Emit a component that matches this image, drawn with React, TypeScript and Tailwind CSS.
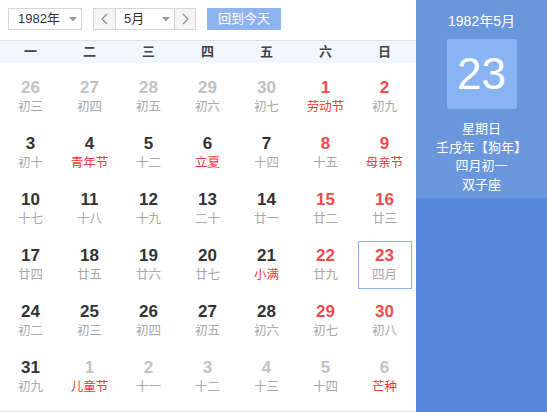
import React from "react";

type Day = {
  n: number;
  l: string;
  other?: boolean;
  red?: boolean;
  fest?: boolean;
  today?: boolean;
};

const weeks: Day[][] = [
  [
    { n: 26, l: "初三", other: true },
    { n: 27, l: "初四", other: true },
    { n: 28, l: "初五", other: true },
    { n: 29, l: "初六", other: true },
    { n: 30, l: "初七", other: true },
    { n: 1, l: "劳动节", red: true, fest: true },
    { n: 2, l: "初九", red: true },
  ],
  [
    { n: 3, l: "初十" },
    { n: 4, l: "青年节", fest: true },
    { n: 5, l: "十二" },
    { n: 6, l: "立夏", fest: true },
    { n: 7, l: "十四" },
    { n: 8, l: "十五", red: true },
    { n: 9, l: "母亲节", red: true, fest: true },
  ],
  [
    { n: 10, l: "十七" },
    { n: 11, l: "十八" },
    { n: 12, l: "十九" },
    { n: 13, l: "二十" },
    { n: 14, l: "廿一" },
    { n: 15, l: "廿二", red: true },
    { n: 16, l: "廿三", red: true },
  ],
  [
    { n: 17, l: "廿四" },
    { n: 18, l: "廿五" },
    { n: 19, l: "廿六" },
    { n: 20, l: "廿七" },
    { n: 21, l: "小满", fest: true },
    { n: 22, l: "廿九", red: true },
    { n: 23, l: "四月", red: true, today: true },
  ],
  [
    { n: 24, l: "初二" },
    { n: 25, l: "初三" },
    { n: 26, l: "初四" },
    { n: 27, l: "初五" },
    { n: 28, l: "初六" },
    { n: 29, l: "初七", red: true },
    { n: 30, l: "初八", red: true },
  ],
  [
    { n: 31, l: "初九" },
    { n: 1, l: "儿童节", other: true, fest: true },
    { n: 2, l: "十一", other: true },
    { n: 3, l: "十二", other: true },
    { n: 4, l: "十三", other: true },
    { n: 5, l: "十四", other: true },
    { n: 6, l: "芒种", other: true, fest: true },
  ],
];

const weekdays = ["一", "二", "三", "四", "五", "六", "日"];

function Caret() {
  return (
    <svg width="8" height="5" viewBox="0 0 8 5" className="shrink-0">
      <path d="M0 0 L8 0 L4 4.5 Z" fill="#9a9a9a" />
    </svg>
  );
}

function Chevron({ dir }: { dir: "l" | "r" }) {
  return (
    <svg width="7" height="12" viewBox="0 0 7 12">
      <path
        d={dir === "l" ? "M6 1 L1 6 L6 11" : "M1 1 L6 6 L1 11"}
        fill="none"
        stroke="#8a8a8a"
        strokeWidth="1.1"
      />
    </svg>
  );
}

function DayCell({ d }: { d: Day }) {
  const numColor = d.other
    ? "text-[#c2c2c2]"
    : d.red
    ? "text-[#f24a4a]"
    : "text-[#333333]";
  const lunarColor = d.fest ? "text-[#f23a3a]" : "text-[#a8a8a8]";
  return (
    <div className="flex h-[56px] items-center justify-center">
      <div
        className={
          "flex h-[48px] w-[54px] flex-col items-center justify-center " +
          (d.today ? "border border-[#8cb4f0]" : "border border-transparent")
        }
      >
        <div className={"text-[17px] font-bold leading-[19px] " + numColor}>
          {d.n}
        </div>
        <div className={"mt-[2px] text-[12.5px] leading-[17px] " + lunarColor}>
          {d.l}
        </div>
      </div>
    </div>
  );
}

export default function App() {
  return (
    <div
      className="flex h-[412px] w-[547px] overflow-hidden bg-white"
      style={{ fontFamily: '"Liberation Sans", Arial, "Noto Sans CJK SC", sans-serif' }}
    >
      <div className="flex w-[416px] flex-col border-b border-[#dcdcdc]">
        <div className="flex h-[40px] items-start gap-[11px] pl-[8px] pt-[8px]">
          <div className="flex h-[22px] w-[74px] items-center justify-between border border-[#d6d6d6] pl-[9px] pr-[4px] text-[13px] text-[#333]">
            <span>1982年</span>
            <Caret />
          </div>
          <div className="flex h-[22px] border border-[#d6d6d6] text-[13px] text-[#333]">
            <div className="flex w-[22px] items-center justify-center border-r border-[#d6d6d6] bg-[#f4f4f4]">
              <Chevron dir="l" />
            </div>
            <div className="flex w-[58px] items-center justify-between pl-[8px] pr-[4px]">
              <span>5月</span>
              <Caret />
            </div>
            <div className="flex w-[21px] items-center justify-center border-l border-[#d6d6d6] bg-[#f4f4f4]">
              <Chevron dir="r" />
            </div>
          </div>
          <div className="flex h-[22px] w-[74px] items-center justify-center bg-[#8db4ee] text-[13px] text-white">
            回到今天
          </div>
        </div>
        <div className="grid h-[23px] grid-cols-7 border-t border-[#e2e2e2] bg-[#f2f6fd] pl-[1px] pr-[2px]">
          {weekdays.map((w) => (
            <div
              key={w}
              className="flex items-center justify-center text-[13px] font-bold text-[#444]"
            >
              {w}
            </div>
          ))}
        </div>
        <div className="grid grid-cols-[repeat(7,59px)] pl-[1px] pt-[6px]">
          {weeks.flat().map((d, i) => (
            <DayCell key={i} d={d} />
          ))}
        </div>
      </div>
      <div className="flex flex-1 flex-col">
        <div className="flex h-[198px] flex-col items-center bg-[#6a97dc] text-white">
          <div className="mt-[12px] text-[14px] leading-[18px]">1982年5月</div>
          <div className="mt-[9px] flex h-[70px] w-[70px] items-center justify-center rounded-[2px] bg-[#88b4f3] text-[44px] leading-none">
            23
          </div>
          <div className="mt-[11px] flex flex-col items-center text-[13px] leading-[18.5px]">
            <span>星期日</span>
            <span>壬戌年【狗年】</span>
            <span>四月初一</span>
            <span>双子座</span>
          </div>
        </div>
        <div className="flex-1 bg-[#5588da]" />
      </div>
    </div>
  );
}
